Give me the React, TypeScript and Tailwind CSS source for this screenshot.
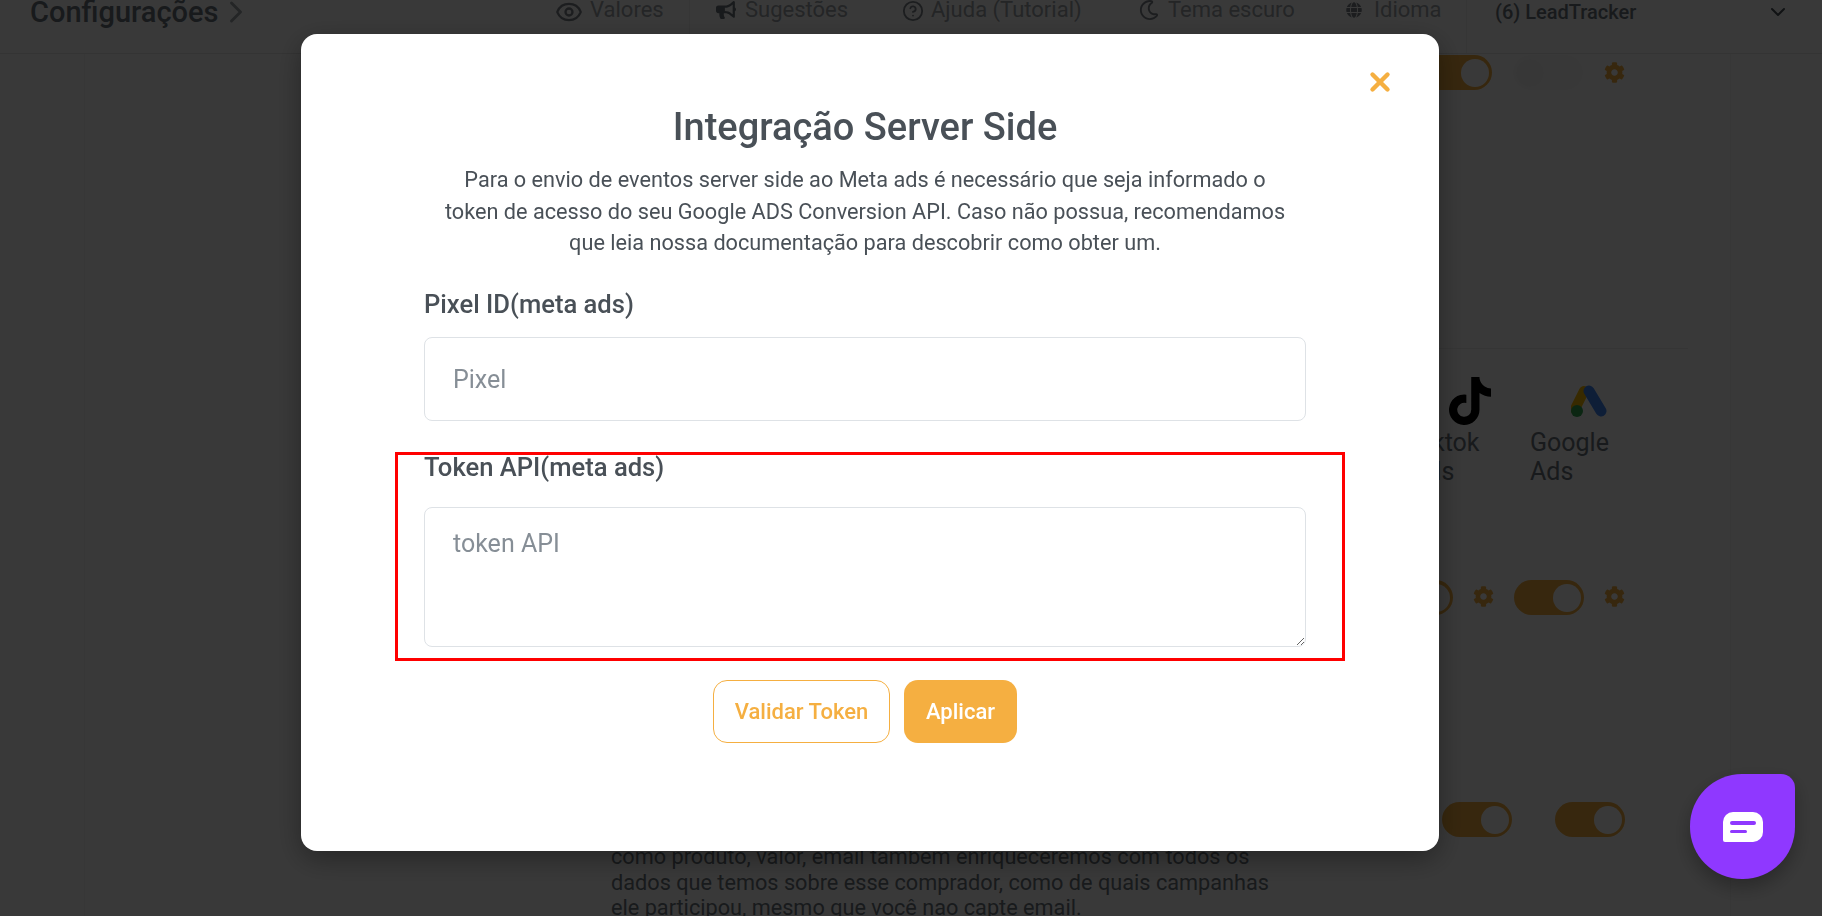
import React from "react";
import { FaBullhorn, FaCog, FaTiktok, FaRegMoon, FaGlobe } from "react-icons/fa";
import { Eye, CircleHelp, ChevronDown, ChevronRight, X } from "lucide-react";

const font = "font-['Roboto','Liberation_Sans',sans-serif]";

function Toggle({ on = true }: { on?: boolean }) {
  return (
    <div className={`flex h-[35px] w-[70px] shrink-0 items-center rounded-full p-[3px] ${on ? "justify-end bg-[#f5af41]" : "justify-start bg-[#fbfbfb]"}`}>
      <div className={`h-[28px] w-[28px] rounded-full ${on ? "bg-white" : "bg-[#f7f7f7]"}`} />
    </div>
  );
}

function NavItem({ icon, label, cls }: { icon: React.ReactNode; label: string; cls: string }) {
  return (
    <div className={`flex items-start leading-[20px] ${cls}`}>
      {icon}
      <span>{label}</span>
    </div>
  );
}

function Background() {
  return (
    <div className="h-[916px] overflow-hidden bg-white text-[#6c757d]">
      <header className="flex h-[54px] border-b border-[#e6e6e6] pl-[30px] text-[22px] text-[#a0a6ac]">
        <div className="flex h-[24px] w-[525px] items-center text-[29px] font-medium leading-[24px] text-[#6c757d]">
          Configurações <ChevronRight className="h-9 w-9 text-[#a0a6ac]" strokeWidth={2} />
        </div>
        <NavItem cls="mr-[26px] w-[135px] gap-[7px] border-r border-[#f0f0f0]" icon={<Eye className="-mt-[2px] h-[28px] w-[28px] text-[#7d848a]" />} label="Valores" />
        <NavItem cls="w-[186px] gap-[9px]" icon={<FaBullhorn className="h-[20px] w-[20px] text-[#6c757d]" />} label="Sugestões" />
        <NavItem cls="w-[237px] gap-[7px]" icon={<CircleHelp className="h-[22px] w-[22px] text-[#7d848a]" />} label="Ajuda (Tutorial)" />
        <NavItem cls="w-[207px] gap-[9px]" icon={<FaRegMoon className="h-[20px] w-[20px] text-[#7d848a]" />} label="Tema escuro" />
        <NavItem cls="mr-[28px] w-[121px] gap-[12px] border-r border-[#f0f0f0]" icon={<FaGlobe className="mt-[2px] h-4 w-4 text-[#7d848a]" />} label="Idioma" />
        <div className="flex h-[24px] w-[295px] items-center justify-between text-[20px] font-medium leading-[24px] text-[#6c757d]">
          (6) LeadTracker <ChevronDown className="h-6 w-6 text-[#495057]" />
        </div>
      </header>
      <main className="ml-[84px] h-[862px] w-[1647px] border-x border-[#f4f4f4]">
        <div className="flex h-[294px] items-start justify-end gap-[21px] pt-[1px] pr-[105px]">
          <Toggle />
          <Toggle on={false} />
          <FaCog className="mt-[7px] h-[21px] w-[21px] text-[#f5af41]" />
        </div>
        <div className="ml-[400px] mr-[42px] flex h-[232px] justify-end gap-[39px] border-t border-[#eeeeee] pt-[28px] pr-[81px]">
          <div className="flex w-[80px] flex-col items-end text-[25px] leading-[29px]">
            <FaTiktok className="h-[48px] w-[42px] text-black" />
            <span className="mt-[3px] w-full">Tiktok Ads</span>
          </div>
          <div className="flex w-[77px] flex-col items-end text-[25px] leading-[29px]">
            <svg viewBox="0 0 36 32" className="mt-[8px] h-[32px] w-[36px]">
              <path d="M13 6 4 24" stroke="#fbbc04" strokeWidth="10" strokeLinecap="round" />
              <circle cx="6" cy="26" r="6" fill="#34a853" />
              <path d="M18 6l12 20" stroke="#4285f4" strokeWidth="11" strokeLinecap="round" />
            </svg>
            <span className="mt-[11px] w-full">Google Ads</span>
          </div>
        </div>
        <div className="flex h-[222px] items-start justify-end gap-[20px] pr-[105px]">
          <Toggle />
          <FaCog className="mt-[6px] h-[21px] w-[21px] text-[#f5af41]" />
          <Toggle />
          <FaCog className="mt-[6px] h-[21px] w-[21px] text-[#f5af41]" />
        </div>
        <div className="flex items-start justify-between pl-[526px] pr-[105px]">
          <p className="mt-[42px] shrink-0 whitespace-nowrap text-[21.7px] leading-[25.5px]">
            como produto, valor, email também enriqueceremos com todos os<br />
            dados que temos sobre esse comprador, como de quais campanhas<br />
            ele participou, mesmo que você nao capte email.
          </p>
          <div className="flex gap-[43px]">
            <Toggle />
            <Toggle />
          </div>
        </div>
      </main>
    </div>
  );
}

function Modal() {
  return (
    <div className="fixed inset-0 bg-black/[0.777] pl-[301px] pt-[34px]">
      <div className="relative h-[817px] w-[1138px] rounded-2xl bg-white pl-[123px] pr-[133px] pt-[74px] text-[#495057] shadow-[0_8px_28px_rgba(0,0,0,0.35)]">
        <X className="absolute right-[44px] top-[33px] h-[30px] w-[30px] text-[#f5af41]" strokeWidth={3.5} />
        <h2 className="text-center text-[38px] font-medium leading-[38px]">Integração Server Side</h2>
        <p className="mt-[18px] text-center text-[21.7px] leading-[31.5px]">
          Para o envio de eventos server side ao Meta ads é necessário que seja informado o<br />
          token de acesso do seu Google ADS Conversion API. Caso não possua, recomendamos<br />
          que leia nossa documentação para descobrir como obter um.
        </p>
        <label className="mt-[29px] block text-[25.6px] font-medium leading-[32px]">Pixel ID(meta ads)</label>
        <input
          placeholder="Pixel"
          className="mt-[17px] block h-[84px] w-full rounded-lg border border-[#dee2e6] px-[28px] pt-[2px] text-[25px] outline-none placeholder:text-[#868e96]"
        />
        <div className="-ml-[29px] -mr-[39px] mt-[31px] border-[3px] border-[#f00] pb-[11px] pl-[26px] pr-[36px]">
          <label className="block text-[25.6px] font-medium leading-[24px]">Token API(meta ads)</label>
          <textarea
            placeholder="token API"
            className="mt-[28px] block h-[140px] w-full rounded-lg border border-[#dee2e6] px-[28px] py-[17px] text-[25px] outline-none placeholder:text-[#868e96]"
          />
        </div>
        <div className="mt-[19px] flex justify-center gap-[14px]">
          <button className="h-[63px] w-[177px] rounded-[14px] border border-[#f5af41] bg-white text-[22px] font-medium text-[#f5af41]">Validar Token</button>
          <button className="h-[63px] w-[113px] rounded-[14px] bg-[#f5af41] text-[22px] font-medium text-white">Aplicar</button>
        </div>
      </div>
    </div>
  );
}

export default function App() {
  return (
    <div className={font}>
      <Background />
      <Modal />
      <div className="fixed left-[1690px] top-[774px] flex h-[105px] w-[105px] items-center justify-center rounded-[52px] rounded-tr-[14px] bg-[#8f38ff] shadow-[0_8px_20px_rgba(0,0,0,0.3)]">
        <svg viewBox="0 0 40 30" className="h-[30px] w-[40px]">
          <path d="M10 0h20a10 10 0 0 1 10 10v10a10 10 0 0 1-10 10H2a2 2 0 0 1-2-2V10A10 10 0 0 1 10 0z" fill="#fff" />
          <rect x="7" y="9" width="26" height="4" rx="2" fill="#8f38ff" />
          <rect x="7" y="18" width="17" height="3" rx="1.5" fill="#8f38ff" />
        </svg>
      </div>
    </div>
  );
}
